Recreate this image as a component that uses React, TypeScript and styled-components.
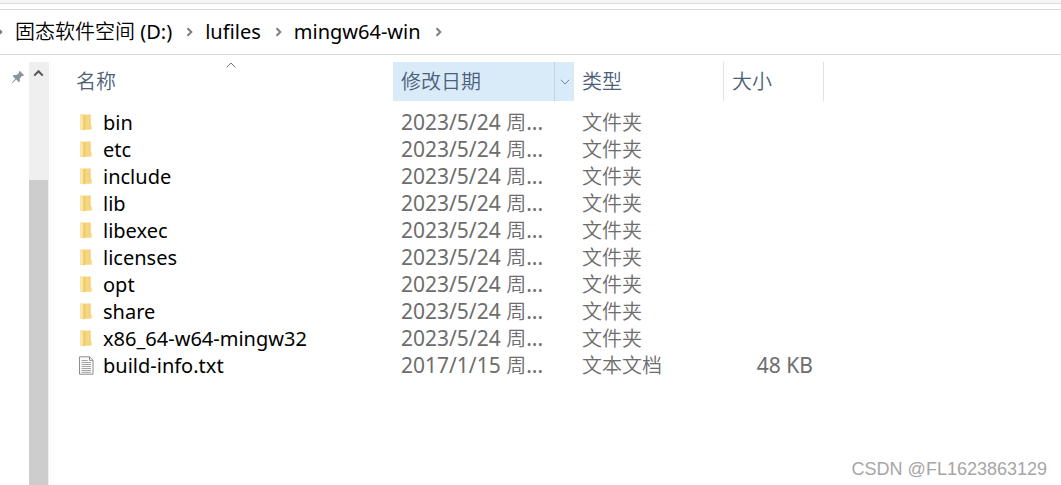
import React from "react";
import styled, { createGlobalStyle } from "styled-components";

const GlobalStyle = createGlobalStyle`
  *, *::before, *::after { box-sizing: border-box; }
  body {
    margin: 0;
    background: #fff;
    color: #000;
    font-family: "Noto Sans", "Noto Sans CJK SC", sans-serif;
    font-size: 20px;
    line-height: 27px;
  }
  button { font: inherit; color: inherit; background: none; border: 0; padding: 0; }
`;

const Window = styled.div`
  position: relative;
  display: flex;
  flex-direction: column;
  min-height: 100vh;
  overflow: hidden;
`;

const RibbonEdge = styled.div`
  height: 4px;
  background: #f5f5f5;
  border-bottom: 1px solid #dadada;
`;

const AddressBar = styled.nav`
  margin-top: 5px;
  padding: 8px 0 9px;
  border: solid #d9d9d9;
  border-width: 1px 0;
`;

const Crumbs = styled.ol`
  display: flex;
  align-items: center;
  margin: 0;
  padding: 0;
  list-style: none;
`;

const Crumb = styled.li`
  display: flex;
  align-items: center;
`;

const CrumbLink = styled.a`
  color: #000;
  text-decoration: none;
  white-space: nowrap;
`;

const Separator = styled.svg<{ $clipped?: boolean }>`
  width: 7px;
  height: 10px;
  margin: 0 12px;
  margin-left: ${(p) => (p.$clipped ? "-4px" : "14px")};
  fill: none;
  stroke: #7d7d7d;
  stroke-width: 2;
`;

const Cjk = styled.span`
  font-family: "Noto Sans CJK SC", sans-serif;
  font-size: 20px;
  line-height: 20px;
  font-weight: 350;
`;

const Body = styled.div`
  display: flex;
  flex: 1;
  padding-top: 7px;
`;

const NavPane = styled.aside`
  width: 29px;
  padding: 8px 0 0 11px;
`;

const PinButton = styled.button`
  display: block;
  svg { display: block; }
`;

const Scrollbar = styled.div`
  display: flex;
  flex-direction: column;
  width: 20px;
  background: #efefef;
`;

const ScrollUp = styled.button`
  display: flex;
  align-items: center;
  justify-content: center;
  width: 19px;
  height: 22px;
`;

const ScrollThumb = styled.div`
  flex: 1;
  width: 19px;
  margin-top: 96px;
  background: #cdcdcd;
`;

const Content = styled.main`
  flex: 1;
  min-width: 0;
  margin-left: 1px;
  padding-left: 17px;
  border-left: 1px solid #fafafa;
`;

const FileTable = styled.table`
  width: 756px;
  table-layout: fixed;
  border-collapse: separate;
  border-spacing: 0;
  tbody::before { content: ""; display: block; height: 8px; }
`;

const HeadCell = styled.th<{ $width: number; $active?: boolean; $divided?: boolean }>`
  position: relative;
  width: ${(p) => p.$width}px;
  height: 39px;
  padding: 0;
  text-align: left;
  font-weight: 300;
  color: #4c607a;
  background: ${(p) => (p.$active ? "#d9ebf9" : "transparent")};
  border-right: ${(p) => (p.$divided ? "1px solid #e2e2e2" : "0")};
`;

const HeadInner = styled.div`
  display: flex;
  align-items: stretch;
  height: 39px;
`;

const SortButton = styled.button`
  flex: 1;
  padding-left: 8px;
  text-align: left;
`;

const FilterButton = styled.button`
  display: flex;
  align-items: center;
  justify-content: center;
  width: 20px;
  border-left: 1px solid #bcd3e6;
`;

const SortMark = styled.svg`
  position: absolute;
  top: 0;
  left: 50%;
  width: 10px;
  height: 6px;
  margin-left: -5px;
`;

const Cell = styled.td<{ $numeric?: boolean; $right?: boolean }>`
  height: 27px;
  padding: 0 8px;
  padding-right: ${(p) => (p.$right ? "11px" : "0")};
  text-align: ${(p) => (p.$right ? "right" : "left")};
  font-size: ${(p) => (p.$numeric ? "21px" : "20px")};
  color: #6d6d6d;
  white-space: nowrap;
`;

const FileName = styled.div`
  display: flex;
  align-items: center;
  gap: 8px;
  height: 27px;
  padding-left: 2px;
  color: #000;
  svg { flex: none; }
`;

const Watermark = styled.div`
  position: absolute;
  right: 14px;
  bottom: 6px;
  color: #a6a6a6;
  font-family: "Liberation Sans", sans-serif;
  font-size: 18px;
  line-height: 20px;
`;

const Chevron = ({ clipped }: { clipped?: boolean }) => (
  <Separator $clipped={clipped} viewBox="0 0 7 10" aria-hidden="true">
    <path d="M1.5 1.2 5.3 5 1.5 8.8" />
  </Separator>
);

const FolderIcon = () => (
  <svg width="17" height="17" viewBox="0 0 17 17" aria-hidden="true">
    <path d="M2 .6h10.4v10.6l1.2.8v3.8H2z" fill="#f6d67f" />
    <path d="M2 .6 5.2 2v14.4L2 15.4z" fill="#fbe6a8" />
    <path d="M5.2 2 7.4 1v14.6l-2.2.8z" fill="#f0cb6c" />
    <path d="M12 .6v10.8l1.4.8" fill="none" stroke="#ecc96c" strokeWidth=".8" />
  </svg>
);

const TextFileIcon = () => (
  <svg width="17" height="19" viewBox="0 0 17 19" aria-hidden="true">
    <path d="M1.5.8h10.1l3.4 3.4v14H1.5z" fill="#fbfbfb" stroke="#8d8d8d" />
    <path d="M11.5.8v3.6H15" fill="none" stroke="#8d8d8d" />
    <path
      d="M3.5 4.5h6.2M3.5 6.5H13M3.5 8.5H13M3.5 10.5H13M3.5 12.5H13M3.5 14.5H13M3.5 16.3H13"
      stroke="#a4a4a4"
      strokeWidth="1"
    />
  </svg>
);

interface Entry {
  name: string;
  date: string;
  type: string;
  size?: string;
}

const folders = ["bin", "etc", "include", "lib", "libexec", "licenses", "opt", "share", "x86_64-w64-mingw32"];

const entries: Entry[] = [
  ...folders.map((name) => ({ name, date: "2023/5/24", type: "文件夹" })),
  { name: "build-info.txt", date: "2017/1/15", type: "文本文档", size: "48 KB" },
];

export default function App() {
  return (
    <>
      <GlobalStyle />
      <Window>
        <RibbonEdge />
        <AddressBar aria-label="路径">
          <Crumbs>
            <Crumb>
              <Chevron clipped />
              <CrumbLink href="#drive"><Cjk>固态软件空间</Cjk> (D:)</CrumbLink>
              <Chevron />
            </Crumb>
            <Crumb>
              <CrumbLink href="#lufiles">lufiles</CrumbLink>
              <Chevron />
            </Crumb>
            <Crumb>
              <CrumbLink href="#mingw64-win">mingw64-win</CrumbLink>
              <Chevron />
            </Crumb>
          </Crumbs>
        </AddressBar>
        <Body>
          <NavPane>
            <PinButton type="button" aria-label="固定">
              <svg width="14" height="15" viewBox="0 0 14 15" aria-hidden="true">
                <path d="M8.6.8 13.2 5.3 11.8 6.1 10.9 6 8.8 8.5 8.9 11.2 7.9 12.2 5.2 9.5 1 13.6.5 13.2 4.3 8.7 1.7 6 2.7 5 5.5 5.1 8 3 7.8 2z" fill="#8795a1" />
              </svg>
            </PinButton>
          </NavPane>
          <Scrollbar>
            <ScrollUp type="button" aria-label="向上滚动">
              <svg width="11" height="8" viewBox="0 0 11 8" aria-hidden="true">
                <path d="M1.2 6.6 5.5 2.2 9.8 6.6" fill="none" stroke="#555" strokeWidth="2" />
              </svg>
            </ScrollUp>
            <ScrollThumb />
          </Scrollbar>
          <Content>
            <FileTable>
              <thead>
                <tr>
                  <HeadCell $width={325}>
                    <HeadInner><SortButton type="button"><Cjk>名称</Cjk></SortButton></HeadInner>
                    <SortMark viewBox="0 0 10 6" aria-hidden="true">
                      <path d="M.6 5.4 5 1 9.4 5.4" fill="none" stroke="#777" />
                    </SortMark>
                  </HeadCell>
                  <HeadCell $width={181} $active>
                    <HeadInner>
                      <SortButton type="button"><Cjk>修改日期</Cjk></SortButton>
                      <FilterButton type="button" aria-label="筛选">
                        <svg width="10" height="6" viewBox="0 0 10 6" aria-hidden="true">
                          <path d="M.8.8 5 5 9.2.8" fill="none" stroke="#71869a" />
                        </svg>
                      </FilterButton>
                    </HeadInner>
                  </HeadCell>
                  <HeadCell $width={150} $divided>
                    <HeadInner><SortButton type="button"><Cjk>类型</Cjk></SortButton></HeadInner>
                  </HeadCell>
                  <HeadCell $width={100} $divided>
                    <HeadInner><SortButton type="button"><Cjk>大小</Cjk></SortButton></HeadInner>
                  </HeadCell>
                </tr>
              </thead>
              <tbody>
                {entries.map((e) => (
                  <tr key={e.name}>
                    <Cell>
                      <FileName>
                        {e.size ? <TextFileIcon /> : <FolderIcon />}
                        {e.name}
                      </FileName>
                    </Cell>
                    <Cell $numeric>{e.date} <Cjk>周</Cjk>...</Cell>
                    <Cell><Cjk>{e.type}</Cjk></Cell>
                    <Cell $numeric $right>{e.size}</Cell>
                  </tr>
                ))}
              </tbody>
            </FileTable>
          </Content>
        </Body>
        <Watermark>CSDN @FL1623863129</Watermark>
      </Window>
    </>
  );
}
